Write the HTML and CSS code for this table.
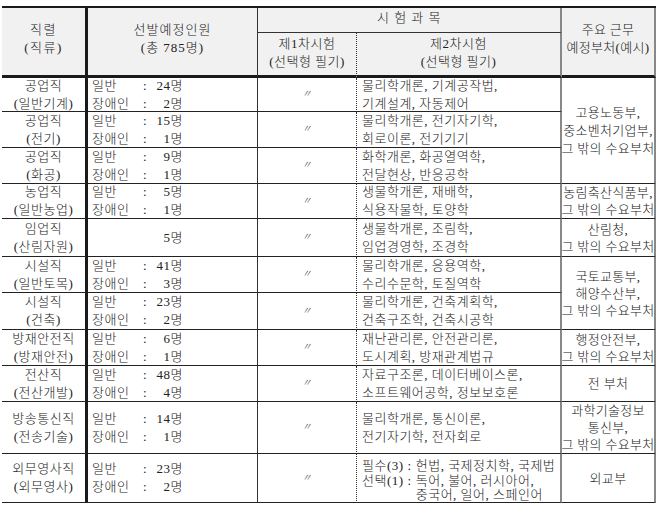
FILE: index.html
```html
<!DOCTYPE html>
<html lang="ko">
<head>
<meta charset="utf-8">
<title>선발예정인원</title>
<link rel="stylesheet" href="styles.css">
</head>
<body>
<div class="tbl">
  <div class="hd hc1 tall"><span>직렬</span><span>(직류)</span></div>
  <div class="hd hc2 tall"><span>선발예정인원</span><span>(총 785명)</span></div>
  <div class="hd hexam">시 험 과 목</div>
  <div class="hd hc3"><span>제1차시험</span><span>(선택형 필기)</span></div>
  <div class="hd hc4"><span>제2차시험</span><span>(선택형 필기)</span></div>
  <div class="hd hc5 tall"><span>주요 근무</span><span>예정부처(예시)</span></div>

  <div class="cell c1"><span>공업직</span><span>(일반기계)</span></div>
  <div class="cell c2"><div class="cnt"><span>일반</span><span>:</span><span class="n">24명</span><span>장애인</span><span>:</span><span class="n">2명</span></div></div>
  <div class="cell c3"><span class="ditto">〃</span></div>
  <div class="cell c4"><span>물리학개론, 기계공작법,</span><span>기계설계, 자동제어</span></div>
  <div class="cell c5 r1"><span>고용노동부,</span><span>중소벤처기업부,</span><span>그 밖의 수요부처</span></div>

  <div class="cell c1"><span>공업직</span><span>(전기)</span></div>
  <div class="cell c2"><div class="cnt"><span>일반</span><span>:</span><span class="n">15명</span><span>장애인</span><span>:</span><span class="n">1명</span></div></div>
  <div class="cell c3"><span class="ditto">〃</span></div>
  <div class="cell c4"><span>물리학개론, 전기자기학,</span><span>회로이론, 전기기기</span></div>

  <div class="cell c1"><span>공업직</span><span>(화공)</span></div>
  <div class="cell c2"><div class="cnt"><span>일반</span><span>:</span><span class="n">9명</span><span>장애인</span><span>:</span><span class="n">1명</span></div></div>
  <div class="cell c3"><span class="ditto">〃</span></div>
  <div class="cell c4"><span>화학개론, 화공열역학,</span><span>전달현상, 반응공학</span></div>

  <div class="cell c1"><span>농업직</span><span>(일반농업)</span></div>
  <div class="cell c2"><div class="cnt"><span>일반</span><span>:</span><span class="n">5명</span><span>장애인</span><span>:</span><span class="n">1명</span></div></div>
  <div class="cell c3"><span class="ditto">〃</span></div>
  <div class="cell c4"><span>생물학개론, 재배학,</span><span>식용작물학, 토양학</span></div>
  <div class="cell c5 r4"><span>농림축산식품부,</span><span>그 밖의 수요부처</span></div>

  <div class="cell c1"><span>임업직</span><span>(산림자원)</span></div>
  <div class="cell c2"><div class="cnt"><span></span><span></span><span class="n">5명</span></div></div>
  <div class="cell c3"><span class="ditto">〃</span></div>
  <div class="cell c4"><span>생물학개론, 조림학,</span><span>임업경영학, 조경학</span></div>
  <div class="cell c5 r5"><span>산림청,</span><span>그 밖의 수요부처</span></div>

  <div class="cell c1"><span>시설직</span><span>(일반토목)</span></div>
  <div class="cell c2"><div class="cnt"><span>일반</span><span>:</span><span class="n">41명</span><span>장애인</span><span>:</span><span class="n">3명</span></div></div>
  <div class="cell c3"><span class="ditto">〃</span></div>
  <div class="cell c4"><span>물리학개론, 응용역학,</span><span>수리수문학, 토질역학</span></div>
  <div class="cell c5 r6"><span>국토교통부,</span><span>해양수산부,</span><span>그 밖의 수요부처</span></div>

  <div class="cell c1"><span>시설직</span><span>(건축)</span></div>
  <div class="cell c2"><div class="cnt"><span>일반</span><span>:</span><span class="n">23명</span><span>장애인</span><span>:</span><span class="n">2명</span></div></div>
  <div class="cell c3"><span class="ditto">〃</span></div>
  <div class="cell c4"><span>물리학개론, 건축계획학,</span><span>건축구조학, 건축시공학</span></div>

  <div class="cell c1"><span>방재안전직</span><span>(방재안전)</span></div>
  <div class="cell c2"><div class="cnt"><span>일반</span><span>:</span><span class="n">6명</span><span>장애인</span><span>:</span><span class="n">1명</span></div></div>
  <div class="cell c3"><span class="ditto">〃</span></div>
  <div class="cell c4"><span>재난관리론, 안전관리론,</span><span>도시계획, 방재관계법규</span></div>
  <div class="cell c5 r8"><span>행정안전부,</span><span>그 밖의 수요부처</span></div>

  <div class="cell c1"><span>전산직</span><span>(전산개발)</span></div>
  <div class="cell c2"><div class="cnt"><span>일반</span><span>:</span><span class="n">48명</span><span>장애인</span><span>:</span><span class="n">4명</span></div></div>
  <div class="cell c3"><span class="ditto">〃</span></div>
  <div class="cell c4"><span>자료구조론, 데이터베이스론,</span><span>소프트웨어공학, 정보보호론</span></div>
  <div class="cell c5 r9"><span>전 부처</span></div>

  <div class="cell c1"><span>방송통신직</span><span>(전송기술)</span></div>
  <div class="cell c2"><div class="cnt"><span>일반</span><span>:</span><span class="n">14명</span><span>장애인</span><span>:</span><span class="n">1명</span></div></div>
  <div class="cell c3"><span class="ditto">〃</span></div>
  <div class="cell c4"><span>물리학개론, 통신이론,</span><span>전기자기학, 전자회로</span></div>
  <div class="cell c5 r10"><span>과학기술정보</span><span>통신부,</span><span>그 밖의 수요부처</span></div>

  <div class="cell c1"><span>외무영사직</span><span>(외무영사)</span></div>
  <div class="cell c2"><div class="cnt"><span>일반</span><span>:</span><span class="n">23명</span><span>장애인</span><span>:</span><span class="n">2명</span></div></div>
  <div class="cell c3"><span class="ditto">〃</span></div>
  <div class="cell c4 last">
    <div class="sel">
      <span>필수(3)</span><span>:</span><span>헌법, 국제정치학, 국제법</span>
      <span>선택(1)</span><span>:</span><span>독어, 불어, 러시아어,</span>
      <span></span><span></span><span>중국어, 일어, 스페인어</span>
    </div>
  </div>
  <div class="cell c5 r11"><span>외교부</span></div>
</div>
</body>
</html>
```

FILE: styles.css
```css
html, body {
  margin: 0;
  padding: 0;
  background: #ffffff;
}

body {
  font-family: "Liberation Serif", "Noto Sans CJK KR", serif;
  font-size: 13px;
  font-weight: 300;
  letter-spacing: 0.5px;
  color: #222222;
}

.tbl {
  display: grid;
  grid-template-columns: 86px 170px 99px 205px 94px;
  grid-template-rows: 25px 45px 34px 36px 36px 35px 38px 36px 37px 36px 36px 52px 49px;
  width: 654px;
  margin: 6px 0 0 2px;
  border-top: 2px solid #1a1a1a;
}

.tbl > div {
  box-sizing: border-box;
  min-width: 0;
}

.hd {
  background: #f1f1f1;
  display: flex;
  flex-direction: column;
  align-items: center;
  justify-content: center;
  line-height: 18px;
  text-align: center;
  border-bottom: 3px solid #1a1a1a;
}

.hc1 { grid-column: 1; grid-row: 1 / 3; border-right: 3px solid #1a1a1a; letter-spacing: 1.5px; }
.hc2 { grid-column: 2; grid-row: 1 / 3; border-right: 1px solid #333; letter-spacing: 1px; }
.hexam {
  grid-column: 3 / 5;
  grid-row: 1;
  border-bottom: 1px solid #333;
  border-right: 2px solid #888;
  word-spacing: 1px;
  padding-bottom: 5px;
}
.hc3 { grid-column: 3; grid-row: 2; border-right: 1px dotted #333; padding-bottom: 3px; }
.hc4 { grid-column: 4; grid-row: 2; border-right: 2px solid #888; padding-bottom: 3px; }
.hc5 { grid-column: 5; grid-row: 1 / 3; border-right: 2px solid #888; letter-spacing: 0.3px; }
.tall { padding-bottom: 6px; }

.cell {
  display: flex;
  flex-direction: column;
  justify-content: center;
  border-bottom: 1px solid #222;
  line-height: 18px;
  white-space: nowrap;
}

.c1 { grid-column: 1; align-items: center; border-right: 3px solid #1a1a1a; }
.c2 { grid-column: 2; border-right: 1px solid #333; padding-left: 4px; }
.c3 { grid-column: 3; align-items: center; border-right: 1px dotted #333; }
.c4 { grid-column: 4; border-right: 2px solid #888; padding-left: 5px; }
.c5 {
  grid-column: 5;
  align-items: center;
  line-height: 17px;
  border-right: 2px solid #888;
  letter-spacing: 0.3px;
}

.r1 { grid-row: 3 / 6; line-height: 18px; }
.r4 { grid-row: 6; }
.r5 { grid-row: 7; }
.r6 { grid-row: 8 / 10; }
.r8 { grid-row: 10; }
.r9 { grid-row: 11; }
.r10 { grid-row: 12; }
.r11 { grid-row: 13; }

.cnt {
  display: grid;
  grid-template-columns: 51px 8px 32px;
  line-height: 18px;
}
.cnt .n { text-align: right; }

.ditto {
  font-family: "Noto Sans CJK KR", sans-serif;
  font-size: 10px;
  font-style: italic;
  color: #333;
  line-height: 12px;
  margin-top: -3px;
}

.last {
  justify-content: flex-start;
  padding-top: 3px;
}

.sel {
  display: grid;
  grid-template-columns: auto auto auto;
  grid-template-rows: 17px 14px 14px;
  line-height: 14px;
  column-gap: 4px;
  justify-content: start;
  align-items: center;
}
```
